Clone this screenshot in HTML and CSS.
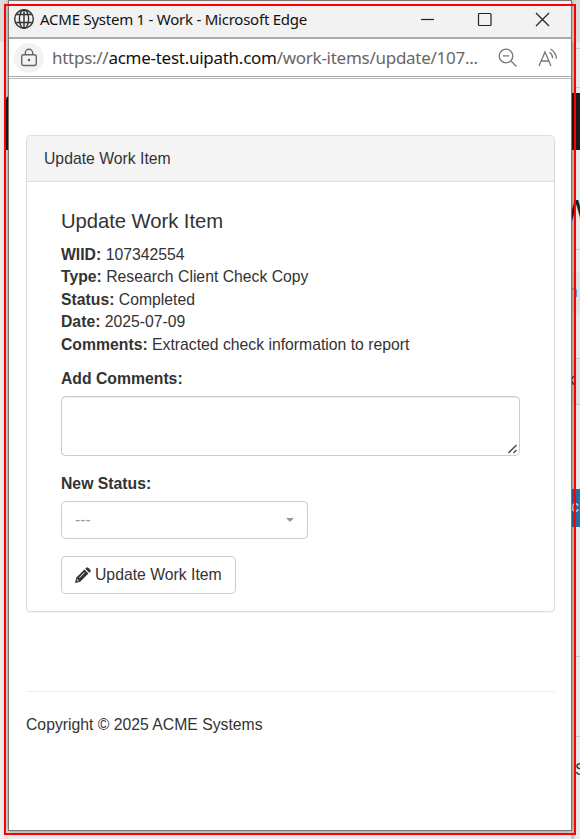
FILE: index.html
```html
<!DOCTYPE html>
<html lang="en">
<head>
<meta charset="utf-8">
<title>ACME System 1 - Work</title>
<link rel="stylesheet" href="styles.css">
</head>
<body>
<div class="desktop">
  <div class="behind-left"><i class="top"></i><i class="nav"></i></div>
  <div class="behind">
    <i class="top"></i><i class="line l1"></i><i class="line l2"></i><i class="nav"></i>
    <span class="big">W</span><i class="line l3"></i><i class="band b1"></i><span class="crumb">n</span>
    <i class="band b2"></i><span class="key">k</span><i class="blue"><span>ck</span></i>
    <i class="line l4"></i><i class="line l5"></i><span class="foot">S</span>
  </div>
  <div class="window">
    <header class="titlebar">
      <svg class="globe" width="22" height="22" viewBox="0 0 22 22"><g fill="none" stroke="#333" stroke-width="1.4"><circle cx="11" cy="11" r="9.3"/><ellipse cx="11" cy="11" rx="4.6" ry="9.3"/><path d="M11 1.7v18.6M3.2 6.5h15.6M3.2 14.5h15.6"/></g></svg>
      <span class="title">ACME System 1 - Work - Microsoft Edge</span>
      <svg class="controls" width="132" height="16" viewBox="0 0 132 16"><g fill="none" stroke="#222" stroke-width="1.2"><path d="M1 8.5h13"/><rect x="58.5" y="2.5" width="12.5" height="12" rx="1"/><path d="M116 2l13 13M129 2l-13 13"/></g></svg>
    </header>
    <div class="address">
      <span class="lock"><svg width="18" height="20" viewBox="0 0 18 20"><g fill="none" stroke="#666" stroke-width="1.4"><rect x="1.7" y="6.7" width="14.6" height="10.8" rx="2"/><path d="M5.3 6.5V5a3.7 3.7 0 0 1 7.4 0v1.5"/></g><circle cx="9" cy="12" r="1.2" fill="#555"/></svg></span>
      <span class="url">https://<b>acme-test.uipath.com</b>/work-items/update/107...</span>
      <svg class="zoom" width="20" height="20" viewBox="0 0 20 20"><path d="M12.8 12.8L18.5 18.5M5 7.8h6.2M14.8 8a6.8 6.8 0 1 1-13.6 0a6.8 6.8 0 0 1 13.6 0" fill="none" stroke="#777" stroke-width="1.3"/></svg>
      <svg class="read" width="20" height="20" viewBox="0 0 20 20"><path d="M1 18L7 4l6 14M3.3 13h7.4M11.5 4.2q3 2.1 3.2 6M12.4 1q5.7 3.4 6 9.8" fill="none" stroke="#777" stroke-width="1.3"/></svg>
    </div>
    <main class="page">
      <section class="panel">
        <div class="panel-heading">Update Work Item</div>
        <div class="panel-body">
          <h4>Update Work Item</h4>
          <p><b>WIID:</b> 107342554<br><b>Type:</b> Research Client Check Copy<br><b>Status:</b> Completed<br><b>Date:</b> 2025-07-09<br><b>Comments:</b> Extracted check information to report</p>
          <label class="first">Add Comments:</label>
          <div class="textarea"><svg width="10" height="10" viewBox="0 0 10 10"><path d="M.5 9L8.5 1M5.5 9L8.5 6" fill="none" stroke="#555" stroke-width="1.6"/></svg></div>
          <label>New Status:</label>
          <div class="select"><span>---</span><i class="caret"></i></div>
          <button class="btn"><svg width="16" height="16" viewBox="0 0 16 16"><path fill="#333" fill-rule="evenodd" d="M0 16l1.2-5.2L9.4 2.6l4 4L5.2 14.8zM1.7 13l1.3 1.3 1-.3-2-2zM4 10.5l.5.5 5.3-5.3-.5-.5zM10.3 1.7l1-1q1-1 2 0l2 2q1 1 0 2l-1 1z"/></svg><span>Update Work Item</span></button>
        </div>
      </section>
      <hr>
      <footer>Copyright © 2025 ACME Systems</footer>
    </main>
  </div>
  <div class="frame"></div>
</div>
</body>
</html>
```
FILE: styles.css
```css
* { box-sizing: border-box; }
body { margin: 0; }
.desktop {
  position: relative;
  width: 580px;
  height: 839px;
  padding-left: 8px;
  overflow: hidden;
  background: #ececec;
  font: 15.75px/22.5px "Liberation Sans", Arial, sans-serif;
  color: #333;
}

/* Slivers of the page that lies behind the popup window */
.behind-left, .behind { position: absolute; top: 0; height: 839px; overflow: hidden; }
.behind-left { left: 0; width: 8px; background: linear-gradient(90deg, #f0f0f0, #e0e0e0); }
.behind { left: 571px; width: 9px; background: linear-gradient(90deg, #c8c8c8 0 3px, #e9e9e9 4px); }
.behind i, .behind span, .behind-left i { position: absolute; left: 0; width: 9px; font-style: normal; }
.top { top: 0; height: 42px; background: #dcdcdc; }
.behind-left .nav { left: 6px; top: 96px; height: 54px; background: #1b1b1b; border-radius: 4px 0 0; }
.behind .nav { top: 93px; height: 57px; background: #1b1b1b; }
.line { height: 1px; background: #c9c9c9; }
.l1 { top: 48px; }
.l2 { top: 87px; }
.l3 { top: 249px; }
.l4 { top: 656px; }
.l5 { top: 736px; }
.band { background: #00000009; }
.b1 { top: 272px; height: 41px; }
.b2 { top: 358px; height: 47px; border: solid #c9c9c9; border-width: 1px 0; }
.behind .big { left: -13px; top: 196px; width: 40px; font-size: 39px; line-height: 36px; color: #222; }
.behind .crumb { left: -2px; top: 281px; color: #6587b8; }
.behind .key { left: -4px; top: 369px; }
.blue { top: 489px; height: 38px; background: #286da8; }
.blue span { top: 7px; color: #ddd; }
.behind .foot { left: 4px; top: 759px; }
.frame { position: absolute; left: 4px; top: 4px; width: 572px; height: 831px; border: 2px solid #f00; }

.window {
  position: relative;
  width: 564px;
  height: 831px;
  background: #fff;
  border: 1px solid #777;
  box-shadow: 0 1px 5px #0006;
}
.titlebar {
  display: flex;
  align-items: center;
  height: 38px;
  padding: 0 19px 0 4px;
  background: #f2f2f2;
  border-bottom: 2px solid #aaa;
  color: #111;
  font: 15px/22px "Noto Sans", "Open Sans", sans-serif;
}
.title { width: 267px; margin-left: 5px; white-space: nowrap; letter-spacing: -.24px; }
.controls { margin-left: auto; }
.address {
  display: flex;
  align-items: center;
  height: 38px;
  padding: 0 13px 0 5px;
  border-bottom: 1px solid #aaa;
  box-shadow: 0 1px #fff, 0 2px #b9b9b9;
  font: 17px/26px "Noto Sans", "Open Sans", sans-serif;
  color: #666;
}
.lock { display: flex; align-items: center; justify-content: center; width: 30px; height: 30px; border-radius: 50%; background: #f2f2f2; }
.url { width: 427px; margin-left: 8px; white-space: nowrap; letter-spacing: -.27px; }
.url b { font-weight: normal; color: #111; }
.zoom { margin-left: auto; }
.read { margin-left: 20px; }

.page { padding: 58px 16px 0 17px; }
.panel { height: 477px; border: 1px solid #ddd; border-radius: 4.5px; box-shadow: 0 1px 1px #0000000d; }
.panel-heading { height: 46px; padding: 12px 17px 11px; background: #f4f4f4; border-bottom: 1px solid #ddd; border-radius: 4px 4px 0 0; }
.panel-body { padding: 28px 34px 0; }
h4 { margin: 0 0 11px; font-size: 20.25px; line-height: 22.5px; font-weight: 500; letter-spacing: -.05px; }
p { margin: 0 0 11px; }
label { display: block; margin-bottom: 6px; font-weight: bold; }
.first { margin: 12px 0 5px; }
.textarea { display: flex; align-items: flex-end; justify-content: flex-end; height: 60px; padding: 1px; margin-bottom: 17px; border: 1px solid #ccc; border-radius: 4.5px; box-shadow: inset 0 1px 1px #00000013; }
.select { display: flex; align-items: center; justify-content: space-between; width: 247px; height: 38px; padding: 0 13px; margin-bottom: 17px; border: 1px solid #ccc; border-radius: 4.5px; color: #999; }
.caret { border: 4.5px solid transparent; border-top-color: #999; border-bottom: 0; }
.btn { display: flex; align-items: center; gap: 4px; height: 38px; padding: 0 13px; border: 1px solid #ccc; border-radius: 4.5px; background: #fff; color: #333; font: inherit; white-space: nowrap; }
hr { margin: 79px 0 22px; border: 0; border-top: 1px solid #eee; }
```
